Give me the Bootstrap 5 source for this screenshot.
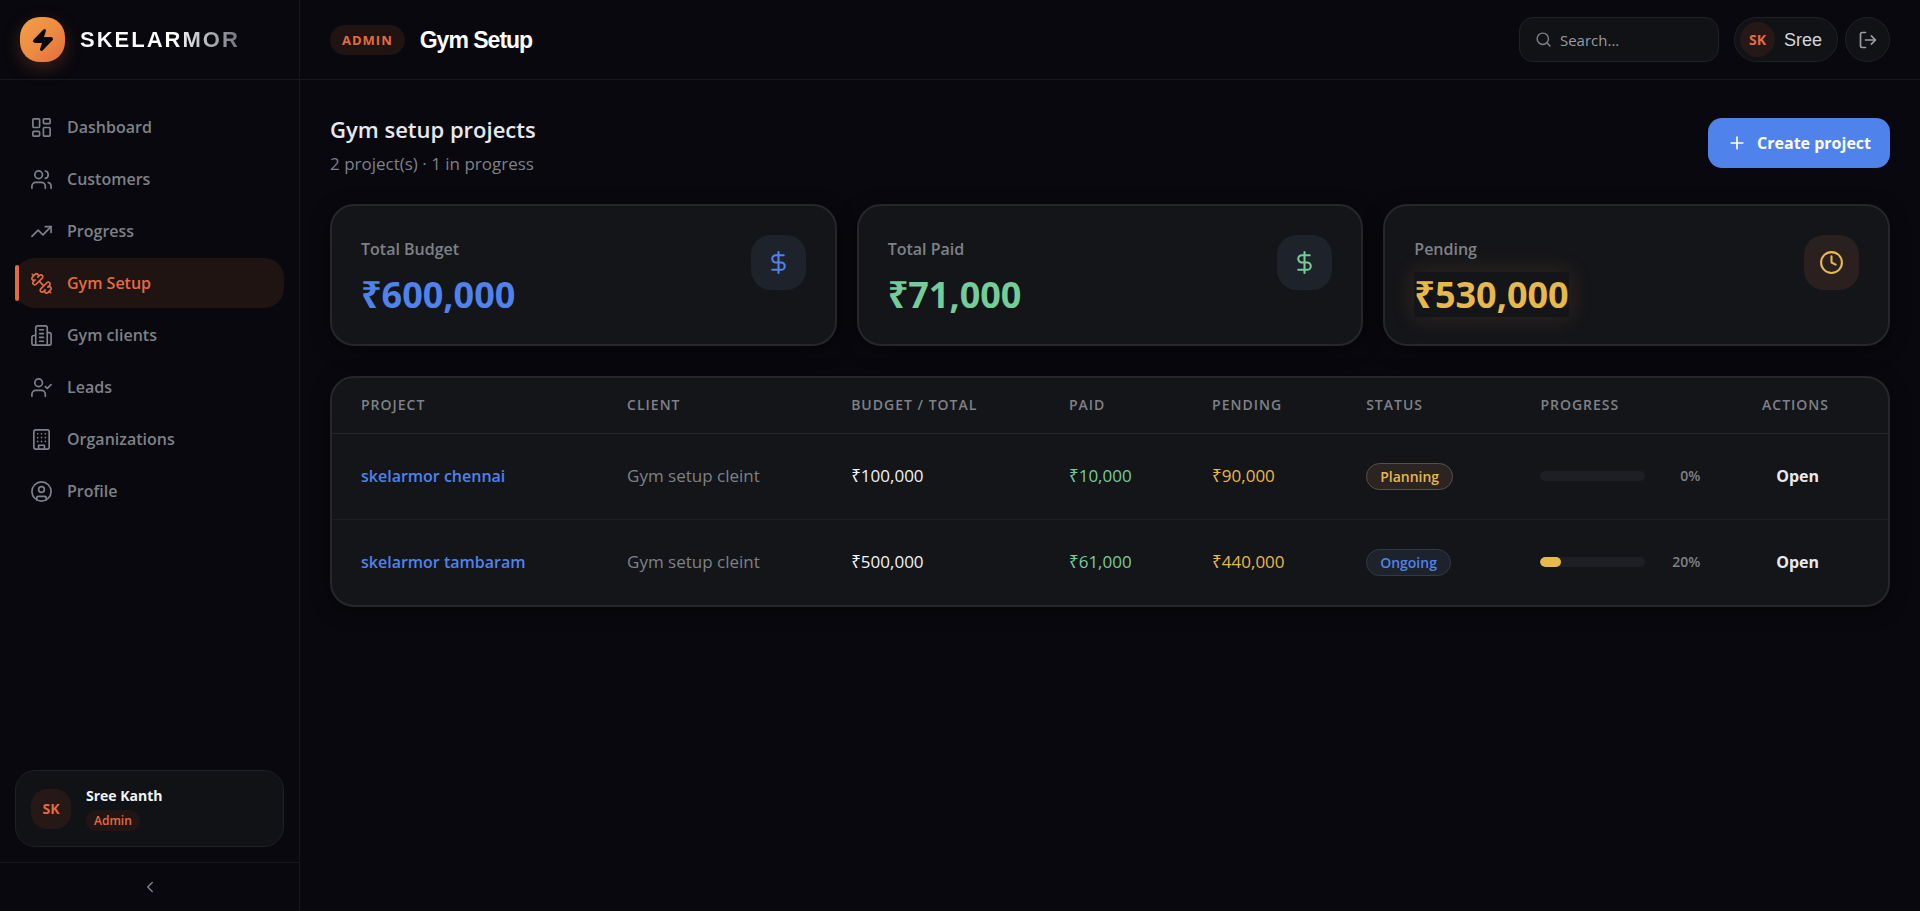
<!DOCTYPE html>
<html lang="en" data-bs-theme="dark">
<head>
<meta charset="utf-8">
<meta name="viewport" content="width=device-width, initial-scale=1">
<title>Gym Setup · Skelarmor</title>
<link href="https://cdn.jsdelivr.net/npm/bootstrap@5.3.0/dist/css/bootstrap.min.css" rel="stylesheet">
<style>
:root{--ink:#08080e;--panel:#141519;--line:#17181c;--edge:#26272b;--muted:#7e8187;--orange:#e36c3e;--blue:#5082ec;--green:#74cc99;--gold:#e7b84b;--soft:#201413}
body{background:var(--ink);color:#f1f2f5;font-family:"Open Sans","Noto Sans",sans-serif;font-size:17px;line-height:26px}
svg{fill:none;stroke:currentColor;stroke-width:2;stroke-linecap:round;stroke-linejoin:round;flex:none}
a{text-decoration:none}
.sidebar{width:300px;border-right:1px solid var(--line)}
.topline{height:80px;border-bottom:1px solid var(--line)}
.brand{padding:0 20px;gap:15px}
.logo-mark{width:45px;height:45px;border-radius:20px;background:linear-gradient(135deg,#f2a048,#ec8a42 55%,#e36c3e);box-shadow:0 6px 18px rgba(227,108,62,.25);color:#0a0a0e}
.logo-text{font:900 22px/28px "Liberation Sans",sans-serif;letter-spacing:2px;background:linear-gradient(90deg,#fff 58%,#6d7178);-webkit-background-clip:text;background-clip:text;color:transparent}
.side-nav{padding:22px 15px;gap:2px}
.side-nav a{height:50px;padding:0 15px;gap:14px;border-radius:20px;color:var(--muted);font-size:16px;font-weight:600;position:relative}
.side-nav a svg{width:23px;height:23px;stroke-width:1.75}
.side-nav a.active{background:var(--soft);color:var(--orange)}
.side-nav a.active::before{content:"";position:absolute;left:0;top:7px;bottom:7px;width:4px;border-radius:2px;background:var(--orange)}
.user-box{margin:0 15px 15px;padding:15px;gap:15px;border:1px solid #1f2023;border-radius:20px;background:#111216}
.initials{background:#261817;color:var(--orange);font-weight:700;font-size:14px}
.user-initials{width:40px;height:40px;border-radius:16px}
.user-name{font-size:14px;line-height:20px}
.role{background:#221615;color:var(--orange);font-size:12px;line-height:21px;padding:0 8px;font-weight:600}
.collapse-btn{height:49px;border:0;border-top:1px solid var(--line);background:none;color:var(--muted)}
.page-pad{padding-left:30px;padding-right:30px}
.tag{background:var(--soft);color:var(--orange);font-size:13px;font-weight:700;letter-spacing:1px;line-height:30px;padding:0 12px;margin-right:15px}
.page-name{font:700 23px/30px "Liberation Sans",sans-serif;letter-spacing:-1px}
.search{width:200px;height:45px;border:1px solid #202125;border-radius:14px;background:#111216;color:var(--muted);padding:0 15px;gap:6px;margin-right:15px}
.search input{border:0;outline:0;background:none;color:#fff;font-size:15px;min-width:0}
.search input::placeholder{color:#989ba1;opacity:1}
.chip{height:45px;border:1px solid #202125;background:#111216;color:#d5d6da}
.user-chip{padding:0 15px 0 5px;gap:9px;margin-right:7px}
.chip .initials{width:35px;height:35px}
.chip-name{font:400 18px/24px "Liberation Sans",sans-serif}
.chip-round{width:45px;color:#9a9ca1}
.main-area{padding-top:32px}
.head-row{margin-bottom:26px}
.heading{font-size:22px;line-height:34px;font-weight:600;color:#e8e9ee}
.subline{color:var(--muted);font-size:17px;line-height:28px}
.create{height:50px;border:0;border-radius:14px;background:var(--blue);color:#fff;font-size:16px;font-weight:700;padding:0 19px;gap:10px;margin-top:6px}
.panel{background:var(--panel);border:2px solid var(--edge);border-radius:24px;box-shadow:0 4px 20px rgba(0,0,0,.45)}
.stat-row{--bs-gutter-x:20px;--bs-gutter-y:20px;margin-bottom:30px}
.stat{padding:29px 29px 27px}
.stat-label{color:var(--muted);font-size:16px;font-weight:600;line-height:28px}
.stat-value{font-size:36px;font-weight:700;line-height:45px;margin-top:9px}
.stat-icon{width:55px;height:55px;border-radius:20px;background:#1e232b}
.warm{background:#2a2020}
.glow{box-shadow:0 0 24px rgba(231,150,75,.16)}
.t-blue{color:var(--blue)}.t-green{color:var(--green)}.t-gold{color:var(--gold)}
.grid-table{--bs-table-bg:transparent;--bs-table-color:inherit;table-layout:fixed;min-width:1300px}
.grid-table th{height:55px;padding:0 0 0 29px;color:var(--muted);font-size:14px;font-weight:600;letter-spacing:1px;vertical-align:middle;border-bottom:1px solid var(--edge)}
.grid-table td{height:86px;padding:0 0 0 29px;vertical-align:middle;border-bottom:1px solid #1e1f23}
.grid-table tbody tr:last-child td{border:0}
.grid-table td:last-child,.grid-table th:last-child{padding-right:59px;text-align:right}
.c1{width:17.1%}.c2{width:14.4%}.c3{width:14%}.c4{width:9.2%}.c5{width:9.9%}.c6{width:11.2%}.c7{width:13.2%}
.project{color:var(--blue);font-size:16px;font-weight:600}
.client{color:var(--muted)}
.state{font-size:14px;font-weight:600;line-height:25px;padding:0 13px;border:1px solid}
.planning{background:#2b2423;border-color:#57504a;color:var(--gold)}
.ongoing{background:#1d222b;border-color:#303a4d;color:var(--blue)}
.meter{width:105px;height:10px;background:#1d1f24}
.meter .progress-bar{background:var(--gold)}
.pct{width:55px;color:var(--muted);font-size:14px;font-weight:600}
.open-btn{border:0;background:none;color:#e8e9ee;font-size:16px;font-weight:700;padding:8px 10px}
</style>
</head>
<body>
<div class="d-flex min-vh-100">
  <aside class="sidebar d-flex flex-column flex-shrink-0">
    <a href="#" class="topline brand d-flex align-items-center">
      <span class="logo-mark d-flex align-items-center justify-content-center"><svg width="24" height="24" viewBox="0 0 24 24"><path fill="currentColor" d="M4 14a1 1 0 0 1-.78-1.63l9.9-10.2a.5.5 0 0 1 .86.46l-1.92 6.02A1 1 0 0 0 13 10h7a1 1 0 0 1 .78 1.63l-9.9 10.2a.5.5 0 0 1-.86-.46l1.92-6.02A1 1 0 0 0 11 14z"/></svg></span>
      <span class="logo-text">SKELARMOR</span>
    </a>
    <nav class="side-nav nav flex-column flex-nowrap flex-grow-1" aria-label="Main">
      <a href="#" class="d-flex align-items-center"><svg viewBox="0 0 24 24"><rect width="7" height="9" x="3" y="3" rx="1"/><rect width="7" height="5" x="14" y="3" rx="1"/><rect width="7" height="9" x="14" y="12" rx="1"/><rect width="7" height="5" x="3" y="16" rx="1"/></svg>Dashboard</a>
      <a href="#" class="d-flex align-items-center"><svg viewBox="0 0 24 24"><path d="M16 21v-2a4 4 0 0 0-4-4H6a4 4 0 0 0-4 4v2"/><circle cx="9" cy="7" r="4"/><path d="M22 21v-2a4 4 0 0 0-3-3.87M16 3.13a4 4 0 0 1 0 7.75"/></svg>Customers</a>
      <a href="#" class="d-flex align-items-center"><svg viewBox="0 0 24 24"><path d="m22 7-8.500 8.500-5-5L2 17"/><path d="M16 7h6v6"/></svg>Progress</a>
      <a href="#" class="d-flex align-items-center active" aria-current="page"><svg viewBox="0 0 24 24"><path d="M14.400 14.400 9.600 9.600M18.657 21.485a2 2 0 1 1-2.829-2.828l-1.767 1.768a2 2 0 1 1-2.829-2.829l6.364-6.364a2 2 0 1 1 2.829 2.829l-1.768 1.767a2 2 0 1 1 2.828 2.829zM21.500 21.500l-1.400-1.400M3.900 3.900 2.500 2.500M6.404 12.768a2 2 0 1 1-2.829-2.829l1.768-1.767a2 2 0 1 1-2.828-2.829l2.828-2.828a2 2 0 1 1 2.829 2.828l1.767-1.768a2 2 0 1 1 2.829 2.829z"/></svg>Gym Setup</a>
      <a href="#" class="d-flex align-items-center"><svg viewBox="0 0 24 24"><path d="M6 22V4a2 2 0 0 1 2-2h8a2 2 0 0 1 2 2v18ZM6 12H4a2 2 0 0 0-2 2v6a2 2 0 0 0 2 2h2M18 9h2a2 2 0 0 1 2 2v9a2 2 0 0 1-2 2h-2M10 6h4M10 10h4M10 14h4M10 18h4"/></svg>Gym clients</a>
      <a href="#" class="d-flex align-items-center"><svg viewBox="0 0 24 24"><path d="M16 21v-2a4 4 0 0 0-4-4H6a4 4 0 0 0-4 4v2"/><circle cx="9" cy="7" r="4"/><path d="m16 11 2 2 4-4"/></svg>Leads</a>
      <a href="#" class="d-flex align-items-center"><svg viewBox="0 0 24 24"><rect width="16" height="20" x="4" y="2" rx="2"/><path d="M9 22v-4h6v4M8 6h.01M16 6h.01M12 6h.01M12 10h.01M12 14h.01M16 10h.01M16 14h.01M8 10h.01M8 14h.01"/></svg>Organizations</a>
      <a href="#" class="d-flex align-items-center"><svg viewBox="0 0 24 24"><circle cx="12" cy="12" r="10"/><circle cx="12" cy="10" r="3"/><path d="M7 20.662V19a2 2 0 0 1 2-2h6a2 2 0 0 1 2 2v1.662"/></svg>Profile</a>
    </nav>
    <div class="user-box d-flex align-items-center">
      <span class="initials user-initials d-flex align-items-center justify-content-center">SK</span>
      <div class="d-flex flex-column align-items-start gap-1">
        <strong class="user-name">Sree Kanth</strong>
        <span class="role rounded-pill">Admin</span>
      </div>
    </div>
    <button type="button" class="collapse-btn d-flex align-items-center justify-content-center" aria-label="Collapse sidebar"><svg width="18" height="18" viewBox="0 0 24 24"><path d="m15 18-6-6 6-6"/></svg></button>
  </aside>
  <div class="flex-grow-1">
    <header class="topline page-pad d-flex align-items-center">
      <span class="tag rounded-pill">ADMIN</span>
      <h1 class="page-name mb-0 me-auto">Gym Setup</h1>
      <label class="search d-flex align-items-center"><svg width="17" height="17" viewBox="0 0 24 24"><circle cx="11" cy="11" r="8"/><path d="m21 21-4.300-4.300"/></svg><input type="search" placeholder="Search..." aria-label="Search"></label>
      <button type="button" class="chip user-chip rounded-pill d-flex align-items-center"><span class="initials rounded-circle d-flex align-items-center justify-content-center">SK</span><span class="chip-name">Sree</span></button>
      <button type="button" class="chip chip-round rounded-circle d-flex align-items-center justify-content-center p-0" aria-label="Log out"><svg width="20" height="20" viewBox="0 0 24 24"><path d="M9 21H5a2 2 0 0 1-2-2V5a2 2 0 0 1 2-2h4M16 17l5-5-5-5M21 12H9"/></svg></button>
    </header>
    <main class="page-pad main-area">
      <div class="d-flex justify-content-between align-items-start head-row">
        <div>
          <h2 class="heading mb-1">Gym setup projects</h2>
          <p class="subline mb-0">2 project(s) · 1 in progress</p>
        </div>
        <button type="button" class="create d-flex align-items-center"><svg width="20" height="20" viewBox="0 0 24 24"><path d="M5 12h14M12 5v14"/></svg>Create project</button>
      </div>
      <div class="row stat-row">
        <div class="col-12 col-md-4"><section class="panel stat d-flex justify-content-between"><div><div class="stat-label">Total Budget</div><div class="stat-value t-blue">₹600,000</div></div><span class="stat-icon t-blue d-flex align-items-center justify-content-center"><svg width="25" height="25" viewBox="0 0 24 24"><path d="M12 2v20M17 5H9.500a3.500 3.500 0 0 0 0 7h5a3.500 3.500 0 0 1 0 7H6"/></svg></span></section></div>
        <div class="col-12 col-md-4"><section class="panel stat d-flex justify-content-between"><div><div class="stat-label">Total Paid</div><div class="stat-value t-green">₹71,000</div></div><span class="stat-icon t-green d-flex align-items-center justify-content-center"><svg width="25" height="25" viewBox="0 0 24 24"><path d="M12 2v20M17 5H9.500a3.500 3.500 0 0 0 0 7h5a3.500 3.500 0 0 1 0 7H6"/></svg></span></section></div>
        <div class="col-12 col-md-4"><section class="panel stat d-flex justify-content-between"><div><div class="stat-label">Pending</div><div class="stat-value t-gold glow">₹530,000</div></div><span class="stat-icon warm t-gold d-flex align-items-center justify-content-center"><svg width="25" height="25" viewBox="0 0 24 24"><circle cx="12" cy="12" r="10"/><path d="M12 6v6l4 2"/></svg></span></section></div>
      </div>
      <section class="panel table-responsive">
        <table class="table grid-table mb-0">
          <colgroup><col class="c1"><col class="c2"><col class="c3"><col class="c4"><col class="c5"><col class="c6"><col class="c7"><col></colgroup>
          <thead><tr><th>PROJECT</th><th>CLIENT</th><th>BUDGET / TOTAL</th><th>PAID</th><th>PENDING</th><th>STATUS</th><th>PROGRESS</th><th>ACTIONS</th></tr></thead>
          <tbody>
            <tr><td><a href="#" class="project">skelarmor chennai</a></td><td class="client">Gym setup cleint</td><td>₹100,000</td><td class="t-green">₹10,000</td><td class="t-gold">₹90,000</td><td><span class="state planning rounded-pill d-inline-block">Planning</span></td><td><div class="d-flex align-items-center"><div class="progress meter rounded-pill" role="progressbar" aria-label="skelarmor chennai" aria-valuenow="0" aria-valuemin="0" aria-valuemax="100"><div class="progress-bar rounded-pill" style="width:0%"></div></div><span class="pct text-end">0%</span></div></td><td><button type="button" class="open-btn">Open</button></td></tr>
            <tr><td><a href="#" class="project">skelarmor tambaram</a></td><td class="client">Gym setup cleint</td><td>₹500,000</td><td class="t-green">₹61,000</td><td class="t-gold">₹440,000</td><td><span class="state ongoing rounded-pill d-inline-block">Ongoing</span></td><td><div class="d-flex align-items-center"><div class="progress meter rounded-pill" role="progressbar" aria-label="skelarmor tambaram" aria-valuenow="20" aria-valuemin="0" aria-valuemax="100"><div class="progress-bar rounded-pill" style="width:20%"></div></div><span class="pct text-end">20%</span></div></td><td><button type="button" class="open-btn">Open</button></td></tr>
          </tbody>
        </table>
      </section>
    </main>
  </div>
</div>
<script src="https://cdn.jsdelivr.net/npm/bootstrap@5.3.0/dist/js/bootstrap.bundle.min.js"></script>
</body>
</html>
